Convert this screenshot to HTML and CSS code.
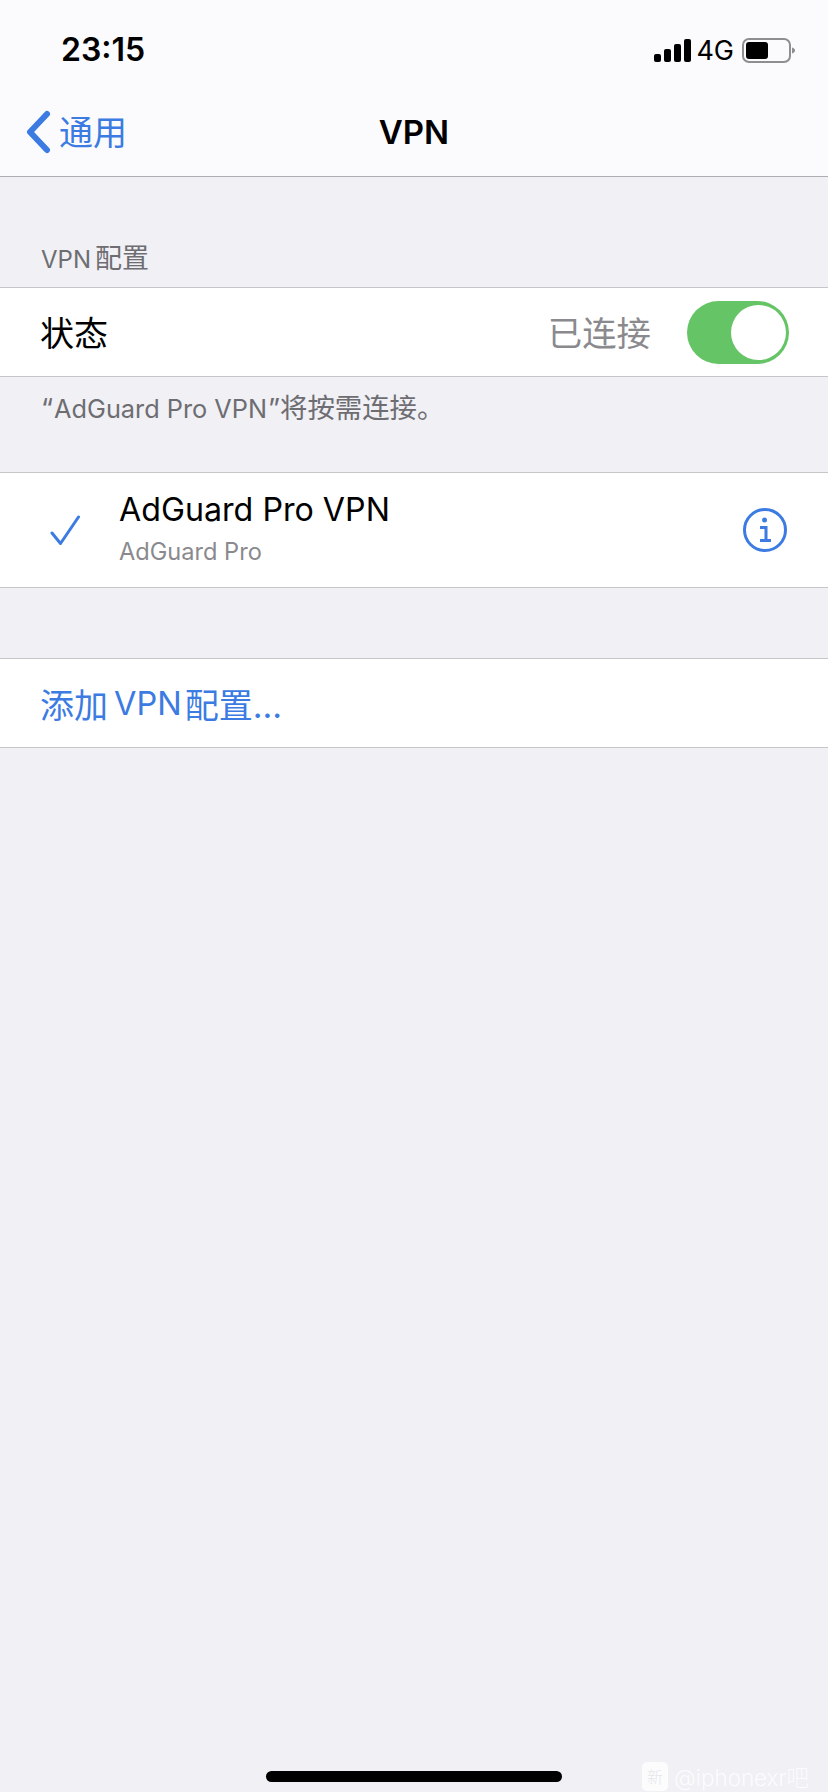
FILE: index.html
```html
<!DOCTYPE html>
<html lang="zh-CN">
<head>
<meta charset="UTF-8">
<meta name="viewport" content="width=device-width, initial-scale=1.0">
<title>VPN</title>
<link rel="stylesheet" href="styles.css">
</head>
<body>

<div class="screen">
    <header class="top">
        <div class="status">
            <span class="time">23:15</span>
            <div class="status-right">
                <svg class="signal" width="37" height="23" viewBox="0 0 37 23">
                    <rect x="0" y="15" width="7" height="8" rx="2"/>
                    <rect x="10" y="10" width="7" height="13" rx="2"/>
                    <rect x="20" y="5" width="7" height="18" rx="2"/>
                    <rect x="30" y="0" width="7" height="23" rx="2"/>
                </svg>
                <span class="net">4G</span>
                <svg class="battery" width="53" height="25" viewBox="0 0 53 25">
                    <rect x="1" y="1" width="47" height="23" rx="6" fill="none" stroke="#8e8e90" stroke-width="2"/>
                    <rect x="4" y="4" width="22" height="17" rx="3" fill="#000"/>
                    <path d="M50 9.5c2 .6 3 1.6 3 3s-1 2.400-3 3z" fill="#8e8e90"/>
                </svg>
            </div>
        </div>
        <nav class="nav">
            <div class="back">
                <svg width="26" height="44" viewBox="0 0 26 44">
                    <path d="M22 4 L5 22 L22 40" fill="none" stroke="#3b7be2" stroke-width="6" stroke-linecap="round" stroke-linejoin="round"/>
                </svg>
                <span class="back-text">通用</span>
            </div>
            <h1 class="title">VPN</h1>
        </nav>
    </header>

    <div class="section-label"><span class="lat">VPN</span>配置</div>
    <div class="row row-status">
        <span class="row-name">状态</span>
        <span class="row-value">已连接</span>
        <div class="toggle"><div class="knob"></div></div>
    </div>
    <div class="section-note">“<span class="lat-plain">AdGuard Pro VPN</span>”将按需连接。</div>

    <div class="row row-profile">
        <svg class="check" width="30" height="31" viewBox="0 0 30 31">
            <path d="M2 18 L10.500 28.500 L28.500 2" fill="none" stroke="#3b7be2" stroke-width="3" stroke-linecap="round" stroke-linejoin="round"/>
        </svg>
        <div class="profile-text">
            <div class="profile-name">AdGuard Pro VPN</div>
            <div class="profile-sub">AdGuard Pro</div>
        </div>
        <svg class="info" width="44" height="44" viewBox="0 0 44 44">
            <circle cx="22" cy="22" r="20.500" fill="none" stroke="#3b7be2" stroke-width="3"/>
            <circle cx="21.500" cy="12" r="2.500" fill="#3b7be2"/>
            <path d="M17 19.500 H23 V32 M17 32.500 H28" fill="none" stroke="#3b7be2" stroke-width="3"/>
        </svg>
    </div>

    <div class="row row-add">添加<span class="add-lat">VPN</span>配置...</div>

    <div class="home-bar"></div>
    <div class="watermark">
        <span class="wm-logo">新</span>
        <span>@iphonexr吧</span>
    </div>
</div>

</body>
</html>
```

FILE: styles.css
```css
* {
    box-sizing: border-box;
}
body {
    margin: 0;
    background-color: #f0f0f5;
    font-family: 'Inter', 'Noto Sans CJK SC', sans-serif;
}
.screen {
    position: relative;
    width: 828px;
    height: 1792px;
    overflow: hidden;
}
.top {
    height: 177px;
    background-color: #fbfbfd;
    border-bottom: 1px solid #aeaeb0;
}
.status {
    display: flex;
    align-items: center;
    justify-content: space-between;
    height: 100px;
    padding: 0 33px 0 61px;
}
.time {
    font-size: 32px;
    font-weight: 600;
    color: #000;
    margin-top: -2px;
}
.status-right {
    display: flex;
    align-items: center;
}
.signal {
    margin-right: 5px;
}
.net {
    font-size: 27px;
    color: #000;
    margin-right: 8px;
}
.nav {
    position: relative;
    display: flex;
    align-items: center;
    height: 64px;
    padding-left: 25px;
}
.back {
    display: flex;
    align-items: center;
    gap: 8px;
    color: #3b7be2;
    font-size: 34px;
}
.back-text {
    margin-top: -4px;
}
.title {
    position: absolute;
    left: 0;
    right: 0;
    margin: 0;
    text-align: center;
    font-size: 33px;
    font-weight: 600;
    color: #000;
}
.section-label {
    height: 110px;
    padding: 64px 0 0 41px;
    font-size: 27px;
    line-height: 36px;
    color: #6d6d72;
}
.lat {
    font-size: 24px;
    margin-right: 4px;
}
.row {
    display: flex;
    align-items: center;
    background-color: #fff;
    border-top: 1px solid #c6c6c9;
    border-bottom: 1px solid #c6c6c9;
}
.row-status {
    height: 90px;
    padding: 0 39px 0 40px;
}
.row-name {
    flex: 1;
    font-size: 34px;
    color: #000;
    margin-top: -2px;
}
.row-value {
    font-size: 34.4px;
    color: #8a8a8e;
    margin-right: 36px;
    margin-top: -2px;
}
.toggle {
    display: flex;
    align-items: center;
    justify-content: flex-end;
    width: 102px;
    height: 63px;
    padding-right: 3px;
    border-radius: 32px;
    background-color: #65c466;
}
.knob {
    width: 55px;
    height: 55px;
    border-radius: 50%;
    background-color: #fff;
}
.section-note {
    height: 95px;
    padding: 13px 0 0 41px;
    font-size: 27.4px;
    line-height: 36px;
    color: #6d6d72;
}
.lat-plain {
    font-size: 25.3px;
    margin: 0 1px 0 1px;
}
.row-profile {
    height: 116px;
    padding: 0 41px 0 50px;
}
.profile-text {
    flex: 1;
    margin-left: 39px;
    margin-top: -4px;
}
.profile-name {
    font-size: 32.2px;
    line-height: 42px;
    color: #000;
}
.profile-sub {
    margin-top: 5px;
    font-size: 23.6px;
    line-height: 32px;
    color: #8a8a8e;
}
.row-add {
    height: 90px;
    margin-top: 70px;
    padding-left: 40px;
    font-size: 34px;
    color: #3b7be2;
}
.add-lat {
    font-size: 32.5px;
    margin: 0 3px 0 6px;
}
.home-bar {
    position: absolute;
    left: 266px;
    top: 1771px;
    width: 296px;
    height: 11px;
    border-radius: 6px;
    background-color: #000;
}
.watermark {
    position: absolute;
    left: 642px;
    top: 1760px;
    display: flex;
    align-items: center;
    gap: 6px;
    font-size: 22.4px;
    color: #fff;
    opacity: 0.85;
    font-weight: 300;
}
.wm-logo {
    display: flex;
    align-items: center;
    justify-content: center;
    width: 26px;
    height: 29px;
    border-radius: 5px;
    background-color: #fff;
    color: #e4e4ea;
    font-size: 16px;
}
```
